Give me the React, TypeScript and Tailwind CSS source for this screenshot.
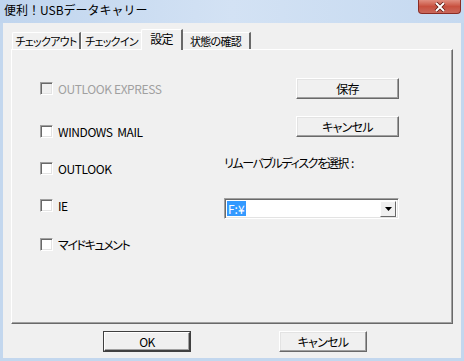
import { useState } from 'react'

const FONT = "font-['Noto_Sans_CJK_JP','Liberation_Sans',sans-serif]"
const JP = "[font-feature-settings:'palt'] tracking-[-0.7px]"
const JP_TIGHT = "[font-feature-settings:'palt'] tracking-[-1.4px]"

const raised =
    'border border-t-white border-l-white border-r-[#696969] border-b-[#696969] shadow-[inset_-1px_-1px_0_#a0a0a0,inset_1px_1px_0_#e3e3e3]'

function Check({ label, disabled, jp }: { label: string; disabled?: boolean; jp?: boolean }) {
    const [on, setOn] = useState(false)
    return (
        <label className="flex items-center h-[13px] gap-[5px] cursor-default" onClick={() => !disabled && setOn(!on)}>
            <span
                className={`w-[13px] h-[13px] flex-shrink-0 border border-t-[#a0a0a0] border-l-[#a0a0a0] border-r-white border-b-white shadow-[inset_1px_1px_0_#696969,inset_-1px_-1px_0_#e3e3e3] flex items-center justify-center text-[9px] leading-none ${disabled ? 'bg-[#f0f0f0]' : 'bg-white'}`}
            >
                {on ? '✓' : ''}
            </span>
            <span className={`text-[12px] leading-none whitespace-pre ${jp ? JP_TIGHT : 'tracking-[-0.4px]'} ${disabled ? 'text-[#a0a0a0]' : 'text-black'}`}>{label}</span>
        </label>
    )
}

function Button({ children, w, isDefault }: { children: React.ReactNode; w: string; isDefault?: boolean }) {
    return (
        <button
            className={`${w} h-[21px] bg-[#f0f0f0] text-[12px] leading-none text-black flex items-center justify-center ${JP} ${isDefault ? 'outline outline-1 outline-[#404040] -outline-offset-1 border-2 border-t-white border-l-white border-r-[#404040] border-b-[#404040] shadow-[inset_-1px_-1px_0_#a0a0a0]' : raised}`}
        >
            {children}
        </button>
    )
}

function Tab({ label, w, active }: { label: string; w: string; active?: boolean }) {
    if (active)
        return (
            <div className={`${w} -mx-[2px] h-[21px] -mb-[1px] relative z-10 bg-[#f0f0f0] border-l border-t border-white border-r-2 border-r-[#696969] rounded-tl-[2px] flex items-start justify-center pt-[3px] text-[12px] leading-none whitespace-nowrap ${JP}`}>
                {label}
            </div>
        )
    return (
        <div className={`${w} h-[17px] bg-[#f0f0f0] border-l border-t border-white border-r-2 border-r-[#696969] rounded-tl-[2px] flex items-center justify-center text-[11px] leading-none whitespace-nowrap ${JP}`}>
            {label}
        </div>
    )
}

export default function App() {
    return (
        <div className={`w-[464px] h-[361px] bg-[#c3d7ee] flex flex-col ${FONT}`}>
            {/* Title bar */}
            <div className="h-[23px] flex items-start justify-between bg-gradient-to-r from-[#c0d5ee] via-[#d3e2f4] to-[#c5d9f0]">
                <span className="pl-[4px] pt-[4px] text-[12px] leading-none text-black">便利！USBデータキャリー</span>
                <div className="mr-[3px] w-[43px] h-[14px] rounded-b-[4px] border border-t-0 border-[#8a2c24] bg-gradient-to-b from-[#e08e80] via-[#c8503f] to-[#c9675a] flex items-center justify-center">
                    <svg width="12" height="10" viewBox="0 0 12 10">
                        <path d="M2 1 L10 9 M10 1 L2 9" stroke="#5c1a14" strokeWidth="3.6" />
                        <path d="M2 1 L10 9 M10 1 L2 9" stroke="white" strokeWidth="2" />
                    </svg>
                </div>
            </div>

            {/* Client area */}
            <div className="mx-[3px] mb-[3px] flex-1 bg-[#f0f0f0] flex flex-col">
                {/* Tabs */}
                <div className="flex items-end h-[26px] pl-[9px]">
                    <Tab label="チェックアウト" w="w-[69px]" />
                    <Tab label="チェックイン" w="w-[62px]" />
                    <Tab label="設定" w="w-[42px]" active />
                    <Tab label="状態の確認" w="w-[70px]" />
                </div>

                {/* Page */}
                <div className="mx-[8px] h-[275px] flex border-l border-t border-white border-r border-b border-r-[#696969] border-b-[#696969] shadow-[inset_-1px_-1px_0_#a0a0a0]">
                    <div className="w-[212px] pl-[28px] flex flex-col">
                        <div className="mt-[32px]"><Check label="OUTLOOK EXPRESS" disabled /></div>
                        <div className="mt-[30px]"><Check label="WINDOWS  MAIL" /></div>
                        <div className="mt-[24px]"><Check label="OUTLOOK" /></div>
                        <div className="mt-[24px]"><Check label="IE" /></div>
                        <div className="mt-[26px]"><Check label="マイドキュメント" jp /></div>
                    </div>
                    <div className="w-[175px] flex flex-col">
                        <div className="mt-[28px] self-end"><Button w="w-[103px]">保存</Button></div>
                        <div className="mt-[17px] self-end"><Button w="w-[103px]">キャンセル</Button></div>
                        <div className="mt-[20px] h-[14px] text-[12px] leading-none whitespace-nowrap flex">
                            <span className={JP_TIGHT}>リムーバブルディスクを選択</span>
                            <span className="ml-[3px]">:</span>
                        </div>
                        <div className="mt-[27px] h-[21px] bg-white border border-t-[#a0a0a0] border-l-[#a0a0a0] border-r-white border-b-white shadow-[inset_1px_1px_0_#696969,inset_-1px_-1px_0_#e3e3e3] flex items-center pl-[2px] pr-[2px]">
                            <span className="bg-[#3399ff] text-white text-[12px] leading-none h-[15px] px-[1px] flex items-center">F:¥</span>
                            <span className="flex-1" />
                            <span className="w-[16px] h-[16px] bg-[#f0f0f0] border border-t-white border-l-white border-r-[#696969] border-b-[#696969] flex items-center justify-center">
                                <svg width="7" height="4" viewBox="0 0 7 4"><path d="M0 0 H7 L3.5 4 Z" fill="black" /></svg>
                            </span>
                        </div>
                    </div>
                </div>

                {/* Bottom buttons */}
                <div className="flex pl-[100px] gap-[88px] mt-[7px]">
                    <Button w="w-[88px]" isDefault>OK</Button>
                    <Button w="w-[88px]">キャンセル</Button>
                </div>
            </div>
        </div>
    )
}
